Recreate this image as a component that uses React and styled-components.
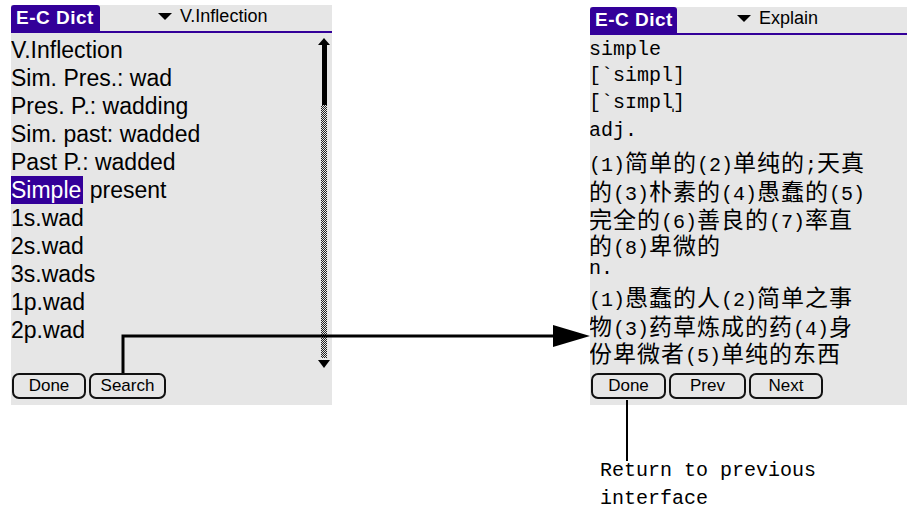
import React from 'react';
import styled, { createGlobalStyle } from 'styled-components';

const PURPLE = '#330099';
const SCREEN = '#e6e6e6';

const GlobalStyle = createGlobalStyle`
  html, body {
    margin: 0;
    padding: 0;
    background: #ffffff;
  }
`;

const Page = styled.div`
  position: relative;
  width: 907px;
  height: 512px;
  overflow: hidden;
  display: flex;
  flex-direction: row;
  align-items: flex-start;
  padding: 5px 0 0 11px;
  box-sizing: border-box;
  font-family: 'Liberation Sans', Arial, sans-serif;
  color: #000;
`;

const Screen = styled.div`
  display: flex;
  flex-direction: column;
  width: ${(p) => p.$w}px;
  height: ${(p) => p.$h}px;
  background: ${SCREEN};
  overflow: hidden;
`;

const TitleBar = styled.div`
  display: flex;
  align-items: stretch;
  height: 28px;
  box-sizing: border-box;
  border-bottom: 2px solid ${PURPLE};
  flex-shrink: 0;
`;

const Tab = styled.div`
  width: ${(p) => p.$w}px;
  background: ${PURPLE};
  color: #fff;
  font-weight: bold;
  font-size: 19px;
  letter-spacing: 0.5px;
  padding-left: 5px;
  box-sizing: border-box;
  display: flex;
  align-items: center;
  border-radius: 3px 3px 0 0;
`;

const Menu = styled.div`
  display: flex;
  align-items: center;
  gap: 8px;
  margin-left: ${(p) => p.$left}px;
  font-size: 18px;
  padding-bottom: 4px;
`;

const Caret = styled.span`
  width: 0;
  height: 0;
  border-left: 7px solid transparent;
  border-right: 7px solid transparent;
  border-top: 7px solid #000;
`;

const Body = styled.div`
  display: flex;
  flex-direction: row;
  padding-top: ${(p) => p.$top}px;
`;

const Lines = styled.div`
  flex: 1;
  display: flex;
  flex-direction: column;
`;

const Line = styled.div`
  height: 28px;
  line-height: 28px;
  font-size: 23px;
  white-space: nowrap;
`;

const Pick = styled.span`
  background: ${PURPLE};
  color: #fff;
  display: inline-block;
  padding-right: 2px;
`;

const ScrollBar = styled.div`
  width: 14px;
  margin: 2px 1px 0 0;
  height: 330px;
  display: flex;
  flex-direction: column;
  align-items: center;
`;

const ArrowUp = styled.span`
  width: 0;
  height: 0;
  border-left: 6px solid transparent;
  border-right: 6px solid transparent;
  border-bottom: 7px solid #000;
`;

const ArrowDown = styled.span`
  width: 0;
  height: 0;
  margin-top: 2px;
  border-left: 6px solid transparent;
  border-right: 6px solid transparent;
  border-top: 8px solid #000;
`;

const Thumb = styled.span`
  width: 5px;
  height: 60px;
  background: #000;
`;

const Track = styled.span`
  flex: 1;
  width: 6px;
  background: repeating-conic-gradient(#222 0 25%, ${SCREEN} 0 50%) 0 0 / 2px 2px;
`;

const MonoLine = styled.div`
  height: ${(p) => p.$h}px;
  display: flex;
  align-items: baseline;
  white-space: nowrap;
  margin-left: -1px;
  line-height: ${(p) => p.$h}px;
`;

const Latin = styled.span`
  font-family: 'Liberation Mono', 'Courier New', monospace;
  font-size: 20px;
`;

const Han = styled.span`
  font-family: 'Noto Sans CJK SC', sans-serif;
  font-size: 23px;
  letter-spacing: 1px;
`;

const ButtonRow = styled.div`
  margin-top: auto;
  display: flex;
  gap: 3px;
  padding: 0 0 ${(p) => p.$bottom}px 1px;
`;

const PalmButton = styled.div`
  width: ${(p) => p.$w}px;
  height: 26px;
  box-sizing: border-box;
  border: 2px solid #111;
  border-radius: 7px;
  display: flex;
  align-items: center;
  justify-content: center;
  font-size: 17px;
`;

const RightColumn = styled.div`
  display: flex;
  flex-direction: column;
  margin: 2px 0 0 258px;
`;

const Note = styled.div`
  margin: 52px 0 0 10px;
  font-family: 'Liberation Mono', 'Courier New', monospace;
  font-size: 20px;
  line-height: 28px;
`;

const Overlay = styled.svg`
  position: absolute;
  left: 0;
  top: 0;
  pointer-events: none;
`;

const inflections = [
  'V.Inflection',
  'Sim. Pres.: wad',
  'Pres. P.: wadding',
  'Sim. past: wadded',
  'Past P.: wadded',
  null,
  '1s.wad',
  '2s.wad',
  '3s.wads',
  '1p.wad',
  '2p.wad',
];

const explain = [
  ['simple', 26],
  ['[`simpl]', 26],
  ['[`sɪmpl̩]', 27],
  ['adj.', 30],
  ['(1)简单的(2)单纯的;天真', 30],
  ['的(3)朴素的(4)愚蠢的(5)', 28],
  ['完全的(6)善良的(7)率直', 28],
  ['的(8)卑微的', 24],
  ['n.', 26],
  ['(1)愚蠢的人(2)简单之事', 29],
  ['物(3)药草炼成的药(4)身', 28],
  ['份卑微者(5)单纯的东西', 26],
];

const Mixed = ({ text }) =>
  text.split(/([\u4e00-\u9fff]+)/).filter(Boolean).map((part, i) =>
    /[\u4e00-\u9fff]/.test(part) ? <Han key={i}>{part}</Han> : <Latin key={i}>{part}</Latin>
  );

const App = () => (
  <>
    <GlobalStyle />
    <Page>
      <Screen $w={321} $h={400}>
        <TitleBar>
          <Tab $w={89}>E-C Dict</Tab>
          <Menu $left={58}>
            <Caret />
            V.Inflection
          </Menu>
        </TitleBar>
        <Body $top={3}>
          <Lines>
            {inflections.map((text, i) =>
              text ? (
                <Line key={i}>{text}</Line>
              ) : (
                <Line key={i}>
                  <Pick>Simple</Pick> present
                </Line>
              )
            )}
          </Lines>
          <ScrollBar>
            <ArrowUp />
            <Thumb />
            <Track />
            <ArrowDown />
          </ScrollBar>
        </Body>
        <ButtonRow $bottom={6}>
          <PalmButton $w={74}>Done</PalmButton>
          <PalmButton $w={77}>Search</PalmButton>
        </ButtonRow>
      </Screen>

      <RightColumn>
        <Screen $w={317} $h={398}>
          <TitleBar>
            <Tab $w={87}>E-C Dict</Tab>
            <Menu $left={60}>
              <Caret />
              Explain
            </Menu>
          </TitleBar>
          <Body $top={2}>
            <Lines>
              {explain.map(([text, h], i) => (
                <MonoLine key={i} $h={h}>
                  <Mixed text={text} />
                </MonoLine>
              ))}
            </Lines>
          </Body>
          <ButtonRow $bottom={6}>
            <PalmButton $w={75}>Done</PalmButton>
            <PalmButton $w={77}>Prev</PalmButton>
            <PalmButton $w={74}>Next</PalmButton>
          </ButtonRow>
        </Screen>
        <Note>
          Return to previous
          <br />
          interface
        </Note>
      </RightColumn>

      <Overlay width="907" height="512" viewBox="0 0 907 512">
        <polyline points="123,373 123,336 556,336" fill="none" stroke="#000" strokeWidth="3" />
        <polygon points="553,325 590,336 553,347" fill="#000" />
        <line x1="627" y1="400" x2="627" y2="461" stroke="#000" strokeWidth="2" />
      </Overlay>
    </Page>
  </>
);

export default App;
